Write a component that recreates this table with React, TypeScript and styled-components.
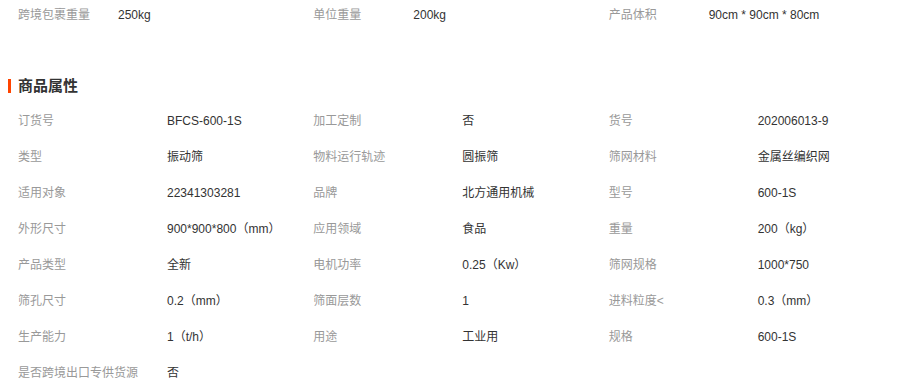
import React from 'react';
import styled, { createGlobalStyle } from 'styled-components';

const GlobalStyle = createGlobalStyle`
    body {
        margin: 0;
        background: #fff;
        font-family: 'Liberation Sans', 'Noto Sans CJK SC', sans-serif;
        font-size: 12px;
        line-height: 18px;
        color: #333;
    }
`;

const topInfo = [
    { label: '跨境包裹重量', value: '250kg' },
    { label: '单位重量', value: '200kg' },
    { label: '产品体积', value: '90cm * 90cm * 80cm' },
];

const attrs = [
    ['订货号', 'BFCS-600-1S'],
    ['加工定制', '否'],
    ['货号', '202006013-9'],
    ['类型', '振动筛'],
    ['物料运行轨迹', '圆振筛'],
    ['筛网材料', '金属丝编织网'],
    ['适用对象', '22341303281'],
    ['品牌', '北方通用机械'],
    ['型号', '600-1S'],
    ['外形尺寸', '900*900*800（mm）'],
    ['应用领域', '食品'],
    ['重量', '200（kg）'],
    ['产品类型', '全新'],
    ['电机功率', '0.25（Kw）'],
    ['筛网规格', '1000*750'],
    ['筛孔尺寸', '0.2（mm）'],
    ['筛面层数', '1'],
    ['进料粒度<', '0.3（mm）'],
    ['生产能力', '1（t/h）'],
    ['用途', '工业用'],
    ['规格', '600-1S'],
    ['是否跨境出口专供货源', '否'],
];

export default function App() {
    return (
        <>
            <GlobalStyle />
            <Page>
                <Grid>
                    {topInfo.map((item) => (
                        <Cell key={item.label} short>
                            <Label width={100}>{item.label}</Label>
                            <Value>{item.value}</Value>
                        </Cell>
                    ))}
                </Grid>
                <Title>商品属性</Title>
                <Grid>
                    {attrs.map(([label, value]) => (
                        <Cell key={label}>
                            <Label width={149}>{label}</Label>
                            <Value>{value}</Value>
                        </Cell>
                    ))}
                </Grid>
            </Page>
        </>
    );
}

const Page = styled.div`
    width: 916px;
    height: 391px;
    overflow: hidden;
`;

const Grid = styled.div`
    display: grid;
    grid-template-columns: repeat(3, 1fr);
    width: 886px;
    padding-left: 18px;
`;

const Cell = styled.div<{ short?: boolean }>`
    display: flex;
    align-items: baseline;
    padding-top: ${(props) => (props.short ? '6px' : '9px')};
    height: ${(props) => (props.short ? '22px' : '27px')};
    white-space: nowrap;
`;

const Label = styled.span<{ width: number }>`
    width: ${(props) => props.width}px;
    flex-shrink: 0;
    color: #999;
`;

const Value = styled.span`
    color: #333;
`;

const Title = styled.h3`
    display: flex;
    align-items: center;
    margin: 48px 0 7px 8px;
    height: 20px;
    line-height: 20px;
    font-size: 15px;
    font-weight: bold;
    color: #333;

    &::before {
        content: '';
        display: block;
        width: 3px;
        height: 14px;
        margin-right: 7px;
        background-color: #ff4400;
    }
`;
